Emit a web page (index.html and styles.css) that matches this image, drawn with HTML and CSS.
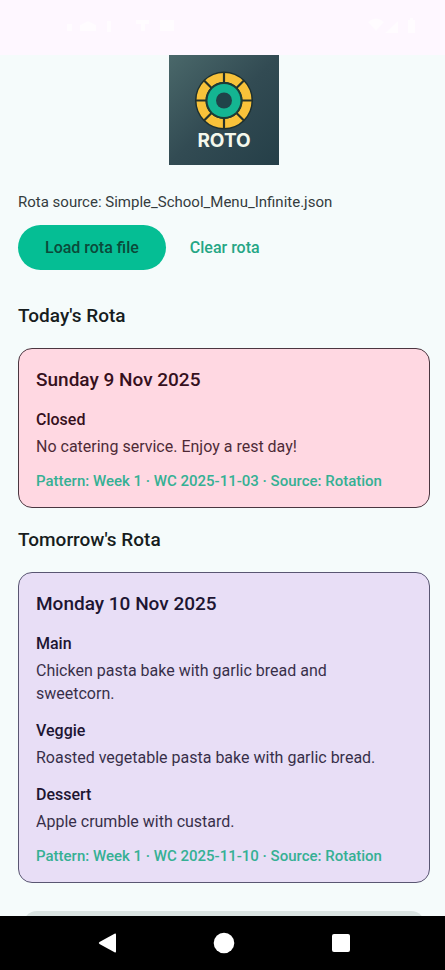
FILE: index.html
```html
<!DOCTYPE html>
<html lang="en">
<head>
<meta charset="utf-8">
<meta name="viewport" content="width=device-width, initial-scale=1">
<title>Roto</title>
<link rel="stylesheet" href="styles.css">
</head>
<body>
<header class="status">
  <svg class="status-icons" width="112" height="18" viewBox="0 0 112 18" aria-hidden="true">
    <path d="M3 7h5v7H3zM16 8l8-4 8 4v6H16zM43 4h4v11h-4zM72 3h13v4h-4v7h-4V7h-5zM96 3h14v11H96z"/>
  </svg>
  <svg class="status-icons" width="52" height="18" viewBox="0 0 52 18" aria-hidden="true">
    <path d="M0 5q8-7 16 0l-8 9zM17 16L30 4v12zM40 3h2V1h3v2h2v13h-7z"/>
  </svg>
</header>
<main class="content">
  <svg class="logo" viewBox="0 0 110 110" role="img" aria-label="Roto logo">
    <defs>
      <linearGradient id="slate" x1="0" y1="0" x2="1" y2="1">
        <stop offset="0" stop-color="#4a686a"/>
        <stop offset="0.5" stop-color="#324b53"/>
        <stop offset="1" stop-color="#253f48"/>
      </linearGradient>
    </defs>
    <rect width="110" height="110" fill="url(#slate)"/>
    <circle cx="55" cy="45.500" r="29" fill="#1d3030"/>
    <circle cx="55" cy="45.500" r="23" fill="none" stroke="#f8c23a" stroke-width="9"/>
    <path d="M55 17v12M55 62v12M26.500 45.500h12M71.500 45.500h12M34.800 25.300l8 8M67.200 57.700l8 8M34.800 65.700l8-8M67.200 33.300l8-8" stroke="#26322a" stroke-width="2.200"/>
    <circle cx="55" cy="45.500" r="18.500" fill="#1d3c36"/>
    <circle cx="55" cy="45.500" r="16.500" fill="#14b592"/>
    <circle cx="55" cy="45.500" r="8" fill="#204349"/>
    <text class="logo-text" x="55" y="92" text-anchor="middle">ROTO</text>
  </svg>
  <p class="source">Rota source: Simple_School_Menu_Infinite.json</p>
  <div class="actions">
    <button class="btn btn-filled" type="button">Load rota file</button>
    <button class="btn btn-text" type="button">Clear rota</button>
  </div>

  <h2 class="section">Today's Rota</h2>
  <article class="card card-closed">
    <h3 class="date">Sunday 9 Nov 2025</h3>
    <h4 class="meal">Closed</h4>
    <p class="dish">No catering service. Enjoy a rest day!</p>
    <p class="meta">Pattern: Week 1 · WC 2025-11-03 · Source: Rotation</p>
  </article>

  <h2 class="section">Tomorrow's Rota</h2>
  <article class="card card-open">
    <h3 class="date">Monday 10 Nov 2025</h3>
    <h4 class="meal">Main</h4>
    <p class="dish">Chicken pasta bake with garlic bread and sweetcorn.</p>
    <h4 class="meal">Veggie</h4>
    <p class="dish">Roasted vegetable pasta bake with garlic bread.</p>
    <h4 class="meal">Dessert</h4>
    <p class="dish">Apple crumble with custard.</p>
    <p class="meta">Pattern: Week 1 · WC 2025-11-10 · Source: Rotation</p>
  </article>
  <div class="next-panel"></div>
</main>
<nav class="navbar" aria-label="System navigation">
  <button class="nav-btn" type="button" aria-label="Back">
    <svg width="24" height="24" viewBox="0 0 24 24"><path d="M21 3.500v17q0 1.500-1.500.8L4.500 13q-1.500-1 0-2l15-8.300q1.500-.7 1.500.8z"/></svg>
  </button>
  <button class="nav-btn" type="button" aria-label="Home">
    <svg width="24" height="24" viewBox="0 0 24 24"><circle cx="12" cy="12" r="10.300"/></svg>
  </button>
  <button class="nav-btn" type="button" aria-label="Recent apps">
    <svg width="24" height="24" viewBox="0 0 24 24"><rect x="3" y="3" width="18" height="18" rx="2"/></svg>
  </button>
</nav>
</body>
</html>
```
FILE: styles.css
```css
* {
  box-sizing: border-box;
  margin: 0;
}

body {
  display: flex;
  flex-direction: column;
  height: 100vh;
  background: #f5fbfb;
  color: #171d1e;
  font-family: Roboto, "Liberation Sans", sans-serif;
  font-size: 16px;
  line-height: 23px;
}

.status {
  flex: none;
  display: flex;
  justify-content: space-between;
  height: 55px;
  padding: 17px 25px 0 64px;
  background: #fef7ff;
}

.status-icons {
  fill: #fffcff;
}

.content {
  flex: 1;
  min-height: 0;
  overflow: hidden;
  padding: 0 15px 0 18px;
}

.logo {
  display: block;
  width: 110px;
  height: 110px;
  margin: 0 auto 28px;
}

.logo-text {
  fill: #f4f8ec;
  font-family: Inter, sans-serif;
  font-size: 19px;
  font-weight: 700;
}

.source {
  font-size: 15px;
  line-height: 18px;
  color: #343c3e;
}

.actions {
  display: flex;
  margin: 14px 0 32px;
}

.btn {
  height: 45px;
  border: 0;
  border-radius: 23px;
  font: inherit;
  font-weight: 500;
}

.btn-filled {
  padding: 0 27px;
  background: #05be94;
  color: #0b4a3a;
}

.btn-text {
  padding: 0 24px;
  background: none;
  color: #25a685;
}

.section,
.date {
  font-size: 19px;
  line-height: 28px;
  font-weight: 500;
}

.card {
  margin: 18px 0;
  padding: 17px 24px 17px 17px;
  border: 1px solid;
  border-radius: 14px;
}

.card-closed {
  background: #ffd8e2;
  border-color: #4a3640;
  color: #36101d;
}

.card-open {
  background: #e8def6;
  border-color: #595672;
  color: #1d1532;
}

.meal {
  margin: 14px 0 4px;
  font-size: 16px;
  font-weight: 500;
}

.dish {
  opacity: 0.88;
}

.meta {
  margin-top: 14px;
  font-size: 15px;
  line-height: 18px;
  font-weight: 500;
  color: #35b094;
}

.next-panel {
  height: 60px;
  margin: 28px 5px 0;
  border-radius: 14px;
  background: #dae4e2;
}

.navbar {
  flex: none;
  display: flex;
  justify-content: center;
  gap: 93px;
  padding: 15px 0 15px 3px;
  background: #000;
}

.nav-btn {
  display: block;
  width: 24px;
  height: 24px;
  padding: 0;
  border: 0;
  background: none;
  fill: #fff;
}

.nav-btn svg {
  display: block;
}
```
